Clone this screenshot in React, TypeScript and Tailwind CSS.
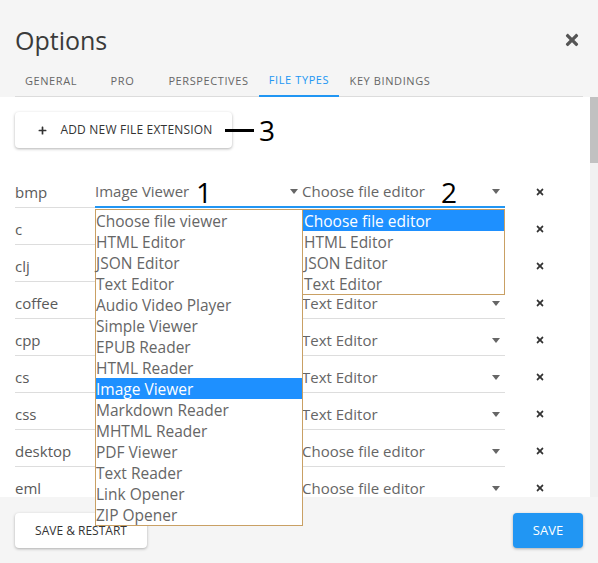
import { FaTimes, FaPlus } from 'react-icons/fa';

const tabs = [
  { label: 'General', w: 'w-[72px]' },
  { label: 'Pro', w: 'w-[71px]' },
  { label: 'Perspectives', w: 'w-[101px]' },
  { label: 'File Types', w: 'w-[80px]', active: true },
  { label: 'Key Bindings', w: 'w-[102px]' },
];

// viewer / editor cells that sit under the open lists are left empty
const rows = [
  { ext: 'bmp', viewer: 'Image Viewer', editor: 'Choose file editor', focused: true },
  { ext: 'c', viewer: '', editor: '' },
  { ext: 'clj', viewer: '', editor: '' },
  { ext: 'coffee', viewer: '', editor: 'Text Editor' },
  { ext: 'cpp', viewer: '', editor: 'Text Editor' },
  { ext: 'cs', viewer: '', editor: 'Text Editor' },
  { ext: 'css', viewer: '', editor: 'Text Editor' },
  { ext: 'desktop', viewer: '', editor: 'Choose file editor' },
  { ext: 'eml', viewer: '', editor: 'Choose file editor' },
];

const viewerOptions = [
  'Choose file viewer',
  'HTML Editor',
  'JSON Editor',
  'Text Editor',
  'Audio Video Player',
  'Simple Viewer',
  'EPUB Reader',
  'HTML Reader',
  'Image Viewer',
  'Markdown Reader',
  'MHTML Reader',
  'PDF Viewer',
  'Text Reader',
  'Link Opener',
  'ZIP Opener',
];

const editorOptions = ['Choose file editor', 'HTML Editor', 'JSON Editor', 'Text Editor'];

function Caret() {
  return <span className="w-0 h-0 border-l-[4px] border-r-[4px] border-t-[5px] border-l-transparent border-r-transparent border-t-[#666]" />;
}

export default function App() {
  return (
    <div className="w-[598px] h-[563px] relative bg-[#f5f5f5] flex flex-col overflow-hidden font-['Open_Sans',sans-serif]">
      {/* Header */}
      <div className="h-[97px] shrink-0 pt-[23px]">
        <div className="flex items-center justify-between pl-[15px] pr-[17px] h-[34px]">
          <h1 className="text-[25px] leading-[34px] text-[#3a3a3a]">Options</h1>
          <FaTimes className="w-[18px] h-[18px] text-[#555]" />
        </div>
        <div className="mx-[15px] mt-[10px] w-[568px] h-[30px] border-b border-[#dcdcdc] flex">
          {tabs.map(t => (
            <div
              key={t.label}
              className={`${t.w} h-[30px] flex items-center justify-center pb-[2px] text-[11px] uppercase tracking-[0.6px] ${
                t.active ? 'text-[#2196f3] border-b-2 border-[#2196f3]' : 'text-[#666]'
              }`}
            >
              {t.label}
            </div>
          ))}
        </div>
      </div>

      {/* Content */}
      <div className="h-[400px] shrink-0 flex">
        <div className="flex-1 bg-white overflow-hidden pt-[15px] px-[15px]">
          <button className="w-[217px] h-[36px] bg-white rounded shadow-[0_1px_3px_rgba(0,0,0,0.3)] flex items-center justify-center gap-[13px] pl-[4px] text-[12px] tracking-[0.2px] text-[#333] uppercase">
            <FaPlus className="w-[9px] h-[9px] text-[#333]" />
            Add new file extension
          </button>

          <div className="mt-[23px]">
            {rows.map(r => (
              <div key={r.ext} className="flex h-[37px]">
                <div className="w-[80px] border-b border-[#ddd] flex items-center pt-[6px] text-[15px] text-[#5a5a5a]">
                  {r.ext}
                </div>
                <div
                  className={`w-[205px] flex items-center justify-between pr-[2px] pt-[6px] text-[15px] text-[#666] ${
                    r.focused ? 'border-b-2 border-[#2196f3]' : 'border-b border-[#ddd]'
                  }`}
                >
                  <span>{r.viewer}</span>
                  <Caret />
                </div>
                <div className={`w-[2px] ${r.focused ? 'border-b-2 border-[#2196f3]' : 'border-b border-[#ddd]'}`} />
                <div
                  className={`w-[203px] flex items-center justify-between pr-[5px] pt-[6px] text-[15px] text-[#666] ${
                    r.focused ? 'border-b-2 border-[#2196f3]' : 'border-b border-[#ddd]'
                  }`}
                >
                  <span>{r.editor}</span>
                  <Caret />
                </div>
                <div className="w-[70px] flex items-center justify-center pt-[5px]">
                  <FaTimes className="w-[10px] h-[10px] text-[#333]" />
                </div>
              </div>
            ))}
          </div>
        </div>
        <div className="w-[8px] bg-[#f1f1f1]">
          <div className="h-[66px] bg-[#c1c1c1]" />
        </div>
      </div>

      {/* Footer */}
      <div className="flex-1 flex items-start justify-between px-[15px] pt-[16px]">
        <button className="w-[132px] h-[35px] bg-white rounded shadow-[0_1px_3px_rgba(0,0,0,0.3)] text-[12px] text-[#333] uppercase">
          Save &amp; Restart
        </button>
        <button className="w-[70px] h-[35px] bg-[#2196f3] rounded shadow-[0_1px_3px_rgba(0,0,0,0.3)] text-[13px] text-white uppercase">
          Save
        </button>
      </div>

      {/* Open dropdown lists */}
      <div className="absolute left-[95px] top-[209px] w-[208px] bg-white border border-[#c9a064]">
        {viewerOptions.map(o => (
          <div
            key={o}
            className={`h-[21px] leading-[20px] pt-[1px] text-[15.5px] ${
              o === 'Image Viewer' ? 'bg-[#1e90ff] text-white' : 'text-[#666]'
            }`}
          >
            {o}
          </div>
        ))}
      </div>
      <div className="absolute left-[302px] top-[209px] w-[203px] bg-white border border-[#c9a064]">
        {editorOptions.map((o, i) => (
          <div
            key={o}
            className={`h-[21px] leading-[20px] pt-[1px] pl-[1px] text-[15.5px] ${i === 0 ? 'bg-[#1e90ff] text-white' : 'text-[#666]'}`}
          >
            {o}
          </div>
        ))}
      </div>

      {/* Annotations */}
      <div className="absolute left-[225px] top-[129px] w-[29px] h-[3px] bg-black" />
      <div className="absolute left-[259px] top-[114px] text-[28px] leading-[32px] text-black">3</div>
      <div className="absolute left-[196px] top-[176px] text-[28px] leading-[32px] text-black">1</div>
      <div className="absolute left-[441px] top-[176px] text-[28px] leading-[32px] text-black">2</div>
    </div>
  );
}
